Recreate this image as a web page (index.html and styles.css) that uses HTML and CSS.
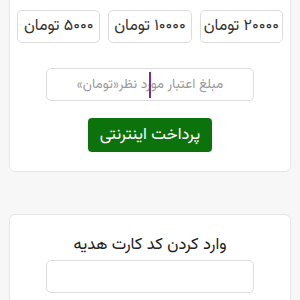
FILE: index.html
```html
<!DOCTYPE html>
<html lang="fa" dir="rtl">
<head>
<meta charset="utf-8">
<link rel="stylesheet" href="styles.css">
</head>
<body>
<div class="page">
  <section class="card card-charge">
    <div class="amounts">
      <button class="amount">۲۰۰۰۰ تومان</button>
      <button class="amount">۱۰۰۰۰ تومان</button>
      <button class="amount">۵۰۰۰ تومان</button>
    </div>
    <div class="field">
      <input class="input input-center" type="text" placeholder="مبلغ اعتبار مورد نظر«تومان»">
      <span class="caret"></span>
    </div>
    <button class="pay">پرداخت اینترنتی</button>
  </section>
  <section class="card card-gift">
    <h2 class="title">وارد کردن کد کارت هدیه</h2>
    <input class="input" type="text">
  </section>
</div>
</body>
</html>
```
FILE: styles.css
```css
* { box-sizing: border-box; }
html, body { margin: 0; padding: 0; }
body {
  background: #f7f7f7;
  font-family: "Vazirmatn", "DejaVu Sans", sans-serif;
  color: #222;
  overflow: hidden;
}
.page {
  padding: 0 9px;
  margin-top: -12px;
}
.card {
  background: #fff;
  border: 1px solid #e6e6e6;
  border-radius: 6px;
  display: flex;
  flex-direction: column;
  align-items: center;
}
.card-charge {
  padding: 21px 7px 19px;
}
.amounts {
  display: grid;
  grid-template-columns: repeat(3, 1fr);
  gap: 8px;
  width: 266px;
}
.amount {
  height: 33px;
  background: #fff;
  border: 1px solid #dcdcdc;
  border-radius: 5px;
  font-family: inherit;
  font-size: 16px;
  color: #333;
  padding: 0;
}
.field {
  position: relative;
  margin-top: 25px;
}
.input {
  display: block;
  width: 208px;
  height: 33px;
  border: 1px solid #dcdcdc;
  border-radius: 5px;
  background: #fff;
  font-family: inherit;
  font-size: 13.5px;
  outline: none;
}
.input-center { text-align: center; }
.input::placeholder { color: #9a9a9a; }
.caret {
  position: absolute;
  left: 103px;
  top: 4px;
  width: 2px;
  height: 26px;
  background: #7d2b8c;
}
.pay {
  margin-top: 17px;
  width: 124px;
  height: 34px;
  background: #0c730c;
  color: #fff;
  border: none;
  border-radius: 4px;
  font-family: inherit;
  font-size: 16.5px;
}
.card-gift {
  margin-top: 42px;
  padding: 18px 7px 20px;
}
.title {
  margin: 0;
  font-size: 16.5px;
  font-weight: normal;
  line-height: 24px;
  color: #222;
}
.card-gift .input { margin-top: 3px; }
```
